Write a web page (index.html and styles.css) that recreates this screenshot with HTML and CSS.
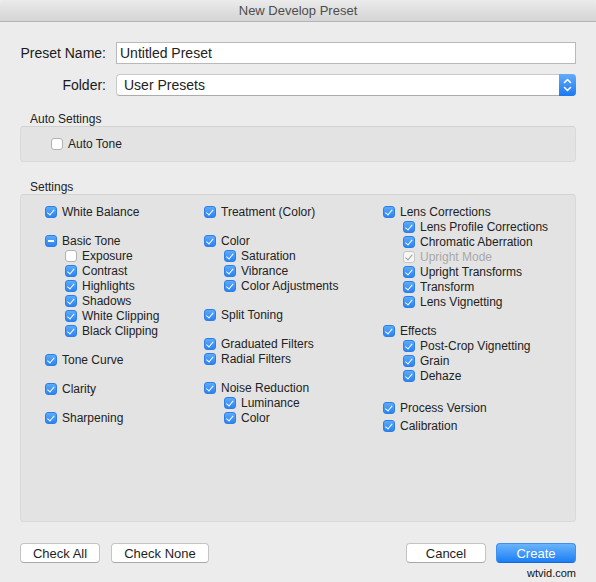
FILE: index.html
```html
<!DOCTYPE html>
<html lang="en">
  <head>
    <meta charset="utf-8">
    <title>New Develop Preset</title>
    <link rel="stylesheet" href="styles.css">
  </head>
  <body>

  <div class="window">
    <div class="titlebar">New Develop Preset</div>

    <div class="content">
      <div class="form">
        <div class="form-label">Preset Name:</div>
        <div class="text-field">Untitled Preset</div>
        <div class="form-label">Folder:</div>
        <div class="popup">
          <span class="popup-value">User Presets</span>
          <span class="stepper">
            <svg width="17" height="22" viewBox="0 0 17 22">
              <polyline points="5.5,8.5 8.5,5.5 11.5,8.5" fill="none" stroke="#fff" stroke-width="1.6" stroke-linecap="round" stroke-linejoin="round"/>
              <polyline points="5.5,13.5 8.5,16.5 11.5,13.5" fill="none" stroke="#fff" stroke-width="1.6" stroke-linecap="round" stroke-linejoin="round"/>
            </svg>
          </span>
        </div>
      </div>

      <div class="group-title">Auto Settings</div>
      <div class="group group-auto">
        <div class="item"><span class="cb"></span>Auto Tone</div>
      </div>

      <div class="group-title group-title-settings">Settings</div>
      <div class="group group-settings">

        <div class="col">
          <div class="set">
            <div class="item"><span class="cb on"></span>White Balance</div>
          </div>
          <div class="set">
            <div class="item"><span class="cb mixed"></span>Basic Tone</div>
            <div class="item sub"><span class="cb"></span>Exposure</div>
            <div class="item sub"><span class="cb on"></span>Contrast</div>
            <div class="item sub"><span class="cb on"></span>Highlights</div>
            <div class="item sub"><span class="cb on"></span>Shadows</div>
            <div class="item sub"><span class="cb on"></span>White Clipping</div>
            <div class="item sub"><span class="cb on"></span>Black Clipping</div>
          </div>
          <div class="set">
            <div class="item"><span class="cb on"></span>Tone Curve</div>
          </div>
          <div class="set">
            <div class="item"><span class="cb on"></span>Clarity</div>
          </div>
          <div class="set">
            <div class="item"><span class="cb on"></span>Sharpening</div>
          </div>
        </div>

        <div class="col">
          <div class="set">
            <div class="item"><span class="cb on"></span>Treatment (Color)</div>
          </div>
          <div class="set">
            <div class="item"><span class="cb on"></span>Color</div>
            <div class="item sub"><span class="cb on"></span>Saturation</div>
            <div class="item sub"><span class="cb on"></span>Vibrance</div>
            <div class="item sub"><span class="cb on"></span>Color Adjustments</div>
          </div>
          <div class="set">
            <div class="item"><span class="cb on"></span>Split Toning</div>
          </div>
          <div class="set">
            <div class="item"><span class="cb on"></span>Graduated Filters</div>
            <div class="item"><span class="cb on"></span>Radial Filters</div>
          </div>
          <div class="set">
            <div class="item"><span class="cb on"></span>Noise Reduction</div>
            <div class="item sub"><span class="cb on"></span>Luminance</div>
            <div class="item sub"><span class="cb on"></span>Color</div>
          </div>
        </div>

        <div class="col">
          <div class="set">
            <div class="item"><span class="cb on"></span>Lens Corrections</div>
            <div class="item sub"><span class="cb on"></span>Lens Profile Corrections</div>
            <div class="item sub"><span class="cb on"></span>Chromatic Aberration</div>
            <div class="item sub disabled"><span class="cb on dim"></span>Upright Mode</div>
            <div class="item sub"><span class="cb on"></span>Upright Transforms</div>
            <div class="item sub"><span class="cb on"></span>Transform</div>
            <div class="item sub"><span class="cb on"></span>Lens Vignetting</div>
          </div>
          <div class="set">
            <div class="item"><span class="cb on"></span>Effects</div>
            <div class="item sub"><span class="cb on"></span>Post-Crop Vignetting</div>
            <div class="item sub"><span class="cb on"></span>Grain</div>
            <div class="item sub"><span class="cb on"></span>Dehaze</div>
          </div>
          <div class="set set-process">
            <div class="item"><span class="cb on"></span>Process Version</div>
            <div class="item item-calibration"><span class="cb on"></span>Calibration</div>
          </div>
        </div>

      </div>

      <div class="buttons">
        <button class="btn btn-check-all">Check All</button>
        <button class="btn btn-check-none">Check None</button>
        <span class="spacer"></span>
        <button class="btn">Cancel</button>
        <button class="btn btn-default">Create</button>
      </div>

      <div class="watermark">wtvid.com</div>
    </div>
  </div>

  </body>
</html>
```

FILE: styles.css
```css
html {
  height: 100%;
}
body {
  margin: 0;
  padding: 0;
  background: #ececec;
  color: #222222;
  font-family: "Liberation Sans", Arial, sans-serif;
  font-size: 12px;
  height: 100%;
}
.window {
  background: #ececec;
  border-radius: 5px 5px 0 0;
  overflow: hidden;
}
.titlebar {
  height: 21px;
  line-height: 21px;
  text-align: center;
  font-size: 13px;
  color: #4d4d4d;
  background: linear-gradient(#ebebeb, #d4d4d4);
  border-bottom: 1px solid #b4b4b4;
}
.content {
  padding: 20px 20px 0 20px;
}

/* name + folder */
.form {
  display: grid;
  grid-template-columns: 86px 1fr;
  grid-auto-rows: 22px;
  column-gap: 10px;
  row-gap: 10px;
  align-items: center;
}
.form-label {
  text-align: right;
  font-size: 14px;
  color: #1a1a1a;
}
.text-field {
  box-sizing: border-box;
  height: 22px;
  line-height: 20px;
  padding: 0 3px;
  font-size: 14px;
  background: #ffffff;
  border: 1px solid #b9b9b9;
}
.popup {
  box-sizing: border-box;
  height: 22px;
  display: flex;
  align-items: center;
  background: #ffffff;
  border-radius: 4px;
  border: 1px solid #c9c9c9;
  border-bottom-color: #acacac;
  border-right: none;
  font-size: 14px;
}
.popup-value {
  flex: 1;
  padding-left: 7px;
}
.stepper {
  width: 17px;
  height: 22px;
  margin-top: -1px;
  margin-bottom: -1px;
  border-radius: 0 4px 4px 0;
  background: linear-gradient(#63adfa, #1a78f0);
}
.stepper svg {
  display: block;
}

/* group boxes */
.group-title {
  height: 14px;
  line-height: 14px;
  padding-left: 10px;
  margin-top: 16px;
  font-size: 12px;
  color: #222;
}
.group-title-settings {
  margin-top: 18px;
}
.group {
  box-sizing: border-box;
  background: #e3e3e3;
  border: 1px solid #d9d9d9;
  border-top-color: #d2d2d2;
  border-radius: 4px;
}
.group-auto {
  height: 36px;
  display: flex;
  align-items: center;
  padding-left: 30px;
}
.group-settings {
  height: 328px;
  padding: 9px 0 0 24px;
  display: grid;
  grid-template-columns: 159px 179px 1fr;
  align-items: start;
}
.col {
  display: flex;
  flex-direction: column;
  gap: 14px;
}
.set-process {
  margin-top: 3px;
}
.item {
  height: 15px;
  display: flex;
  align-items: center;
  white-space: nowrap;
}
.item.sub {
  padding-left: 20px;
}
.item.disabled {
  color: #a9a9a9;
}
.item-calibration {
  margin-top: 3px;
}

/* checkboxes */
.cb {
  position: relative;
  box-sizing: border-box;
  flex: none;
  width: 12px;
  height: 12px;
  margin-right: 5px;
  border-radius: 3px;
  background: #ffffff;
  border: 1px solid #b2b2b2;
}
.cb.on {
  background: linear-gradient(#5eaaf9, #2a84f3);
  border-color: #2d7fe6;
}
.cb.on::after {
  content: "";
  position: absolute;
  left: 3px;
  top: 1px;
  width: 2.5px;
  height: 5.5px;
  border: solid #ffffff;
  border-width: 0 1.7px 1.7px 0;
  transform: rotate(40deg);
}
.cb.mixed {
  background: linear-gradient(#5eaaf9, #2a84f3);
  border-color: #2d7fe6;
}
.cb.mixed::after {
  content: "";
  position: absolute;
  left: 2px;
  top: 4px;
  width: 6px;
  height: 2px;
  background: #ffffff;
}
.cb.dim {
  background: #f6f6f6;
  border-color: #c6c6c6;
}
.cb.dim::after {
  border-color: #9c9c9c;
}

/* bottom buttons */
.buttons {
  display: flex;
  margin-top: 21px;
}
.spacer {
  flex: 1;
}
.btn {
  box-sizing: border-box;
  width: 80px;
  height: 20px;
  padding: 0;
  font-family: "Liberation Sans", Arial, sans-serif;
  font-size: 13px;
  color: #1e1e1e;
  background: #ffffff;
  border: 1px solid #c4c4c4;
  border-bottom-color: #a9a9a9;
  border-radius: 4px;
  margin-right: 10px;
}
.btn-check-none {
  width: 98px;
  margin-left: 1px;
}
.btn-default {
  margin-right: 0;
  color: #ffffff;
  background: linear-gradient(#6ab4fb, #1b7ff5);
  border-color: #3f8ef0;
  border-bottom-color: #1a6ad6;
}
.watermark {
  margin-top: 4px;
  text-align: right;
  font-size: 11px;
  line-height: 12px;
  color: #111;
}
```
